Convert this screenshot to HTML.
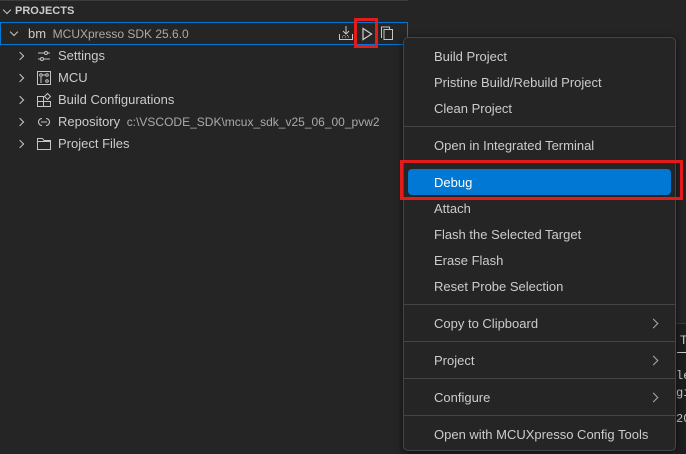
<!DOCTYPE html>
<html><head><style>
*{margin:0;padding:0;box-sizing:border-box}
body{width:686px;height:454px;background:#252526;font-family:"Segoe UI","Liberation Sans",sans-serif;font-size:13px;color:#ccc;position:relative;overflow:hidden}
.a{position:absolute;white-space:nowrap}
.chev{position:absolute;width:6px;height:6px;border-right:1.3px solid #c5c5c5;border-bottom:1.3px solid #c5c5c5}
.menu{position:absolute;left:403px;top:37px;width:273px;height:414px;background:#252526;border:1px solid #454545;border-radius:5px;box-shadow:0 2px 8px rgba(0,0,0,.6)}
.mi{position:absolute;left:30px;height:26px;line-height:26px;color:#ccc}
.sep{position:absolute;left:0;width:271px;height:1px;background:#454545}
.sub{position:absolute;right:18px;width:7px;height:7px;border-right:1.3px solid #aaa;border-top:1.3px solid #aaa;transform:rotate(45deg)}
</style></head><body>
<div class="a" style="left:0;top:0;width:408px;height:1px;background:#3c3c3c"></div>
<div class="chev" style="left:4px;top:7px;transform:rotate(45deg)"></div>
<div class="a" style="left:15px;top:5px;font-size:11px;font-weight:bold;color:#ccc">PROJECTS</div>
<div class="a" style="left:0;top:22px;width:408px;height:23px;border:1px solid #0078d4;background:#252526"></div>
<div class="chev" style="left:11px;top:29px;transform:rotate(45deg)"></div>
<div class="a" style="left:28px;top:25px;line-height:18px;color:#ccc">bm <span style="font-size:12px;color:#aaa;margin-left:3px">MCUXpresso SDK 25.6.0</span></div>
<svg class="a" style="left:338px;top:25px" width="16" height="16" viewBox="0 0 16 16" fill="none" stroke="#c5c5c5" stroke-width="1"><path d="M8 1v8M5 6l3 3 3-3M1.5 9v5.5h13V9"/><path d="M4 12h1M7 12h1M10 12h1M5.5 10.5h1M9 10.5h1" stroke-dasharray="1 1"/></svg>
<svg class="a" style="left:360px;top:26px" width="14" height="16" viewBox="0 0 14 16" fill="none" stroke="#c5c5c5" stroke-width="1.3"><path d="M3 2.5v11l8.5-5.5z"/></svg>
<div class="a" style="left:354px;top:18px;width:24px;height:30px;border:3px solid #e31b1b"></div>
<svg class="a" style="left:379px;top:25px" width="16" height="16" viewBox="0 0 16 16" fill="none" stroke="#c5c5c5" stroke-width="1"><path d="M5 4.5h8.5v10H5z"/><path d="M3 12.5h-.5v-10.5h8v2"/></svg>
<div class="a" style="left:405px;top:40px;width:3px;height:120px;background:#333"></div>

<div class="chev" style="left:17px;top:53px;transform:rotate(-45deg)"></div>
<svg class="a" style="left:36px;top:48px" width="16" height="16" viewBox="0 0 16 16" fill="none" stroke="#c5c5c5" stroke-width="1"><path d="M2 5h12M2 11h12"/><circle cx="10" cy="5" r="1.5" fill="#252526"/><circle cx="6" cy="11" r="1.5" fill="#252526"/></svg>
<div class="a" style="left:58px;top:47px;line-height:18px">Settings</div>
<div class="chev" style="left:17px;top:75px;transform:rotate(-45deg)"></div>
<svg class="a" style="left:36px;top:70px" width="16" height="16" viewBox="0 0 16 16" fill="none" stroke="#c5c5c5" stroke-width="1"><rect x="1.5" y="1.5" width="13" height="13"/><circle cx="5" cy="5" r="1.3"/><circle cx="11" cy="5" r="1.3"/><circle cx="11" cy="11" r="1.3"/><path d="M5 7v6M6.5 5h3"/></svg>
<div class="a" style="left:58px;top:69px;line-height:18px">MCU</div>
<div class="chev" style="left:17px;top:97px;transform:rotate(-45deg)"></div>
<svg class="a" style="left:36px;top:92px" width="16" height="16" viewBox="0 0 16 16" fill="none" stroke="#c5c5c5" stroke-width="1"><path d="M1.5 4.5h6v10h-6zM7.5 9.5h7v5h-7M1.5 9.5h6"/><path d="M11.5 1.5l3 3-3 3-3-3z"/></svg>
<div class="a" style="left:58px;top:91px;line-height:18px">Build Configurations</div>
<div class="chev" style="left:17px;top:119px;transform:rotate(-45deg)"></div>
<svg class="a" style="left:36px;top:114px" width="16" height="16" viewBox="0 0 16 16" fill="none" stroke="#c5c5c5" stroke-width="1.1"><path d="M6 4.5a3.5 3.5 0 1 0 0 7M10 4.5a3.5 3.5 0 1 1 0 7M5 8h6"/></svg>
<div class="a" style="left:58px;top:113px;line-height:18px">Repository <span style="font-size:12px;color:#aaa;margin-left:3px">c:\VSCODE_SDK\mcux_sdk_v25_06_00_pvw2</span></div>
<div class="chev" style="left:17px;top:141px;transform:rotate(-45deg)"></div>
<svg class="a" style="left:36px;top:136px" width="16" height="16" viewBox="0 0 16 16" fill="none" stroke="#c5c5c5" stroke-width="1"><path d="M1.5 2.5h5l1.5 2h6.5v9h-13zM1.5 5.5h13"/></svg>
<div class="a" style="left:58px;top:135px;line-height:18px">Project Files</div>

<div class="a" style="left:676px;top:323px;width:10px;height:131px;background:#1e1e1e;border-top:1px solid #3c3c3c"></div>
<div class="a" style="left:680px;top:333px;font-size:12px;color:#ccc">T</div>
<div class="a" style="left:677px;top:352px;width:9px;height:1px;background:#ccc"></div>
<div class="a" style="left:676px;top:368px;font-family:'Liberation Mono',monospace;font-size:12px;line-height:17px;color:#ccc">le<br>gi</div>
<div class="a" style="left:676px;top:412px;font-family:'Liberation Mono',monospace;font-size:12px;color:#ccc">20</div>

<div class="menu">
<div class="mi" style="top:6px">Build Project</div>
<div class="mi" style="top:32px">Pristine Build/Rebuild Project</div>
<div class="mi" style="top:58px">Clean Project</div>
<div class="sep" style="top:88px"></div>
<div class="mi" style="top:95px">Open in Integrated Terminal</div>
<div class="a" style="left:4px;top:131px;width:263px;height:26px;background:#0078d4;border-radius:4px"></div>
<div class="mi" style="top:132px;color:#fff">Debug</div>
<div class="mi" style="top:158px">Attach</div>
<div class="mi" style="top:184px">Flash the Selected Target</div>
<div class="mi" style="top:210px">Erase Flash</div>
<div class="mi" style="top:236px">Reset Probe Selection</div>
<div class="sep" style="top:266px"></div>
<div class="mi" style="top:273px">Copy to Clipboard</div><div class="sub" style="top:282px"></div>
<div class="sep" style="top:303px"></div>
<div class="mi" style="top:310px">Project</div><div class="sub" style="top:319px"></div>
<div class="sep" style="top:340px"></div>
<div class="mi" style="top:347px">Configure</div><div class="sub" style="top:356px"></div>
<div class="sep" style="top:377px"></div>
<div class="mi" style="top:384px">Open with MCUXpresso Config Tools</div>
</div>
<div class="a" style="left:400px;top:160px;width:283px;height:40px;border:3px solid #e31b1b"></div>
</body></html>
